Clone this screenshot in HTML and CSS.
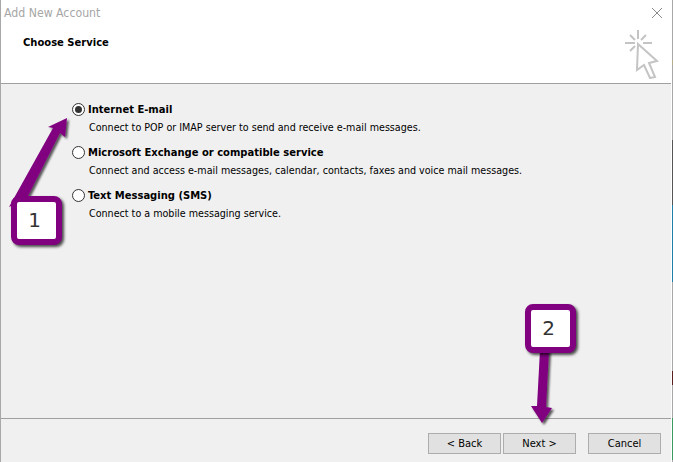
FILE: index.html
```html
<!DOCTYPE html>
<html>
<head>
<meta charset="utf-8">
<title>Add New Account</title>
<link rel="stylesheet" href="styles.css">
</head>
<body>
<div class="window">
  <header class="header">
    <div class="title-row">
      <span class="title">Add New Account</span>
      <svg class="close" width="10" height="10" viewBox="0 0 10 10"><path d="M0 0L10 10M10 0L0 10" stroke="#8a8a8a" stroke-width="1" fill="none"/></svg>
    </div>
    <div class="sub-row">
      <h1 class="heading">Choose Service</h1>
      <svg class="wizard" width="36" height="49" viewBox="0 0 36 49">
        <g stroke="#c4c4c4" stroke-width="2" fill="none">
          <path d="M13 0V9M0 13H10M18 13H27M5 5L10 10M21 5L16 10M5 21L10 16"/>
          <path d="M13 14L32 31L24 33L30 47L25 48L19 35L12 40Z" fill="#fff"/>
        </g>
      </svg>
    </div>
  </header>
  <main class="body">
    <div class="option">
      <div class="option-head"><span class="radio radio-on"></span><span class="option-title">Internet E-mail</span></div>
      <p class="option-desc">Connect to POP or IMAP server to send and receive e-mail messages.</p>
    </div>
    <div class="option">
      <div class="option-head"><span class="radio"></span><span class="option-title">Microsoft Exchange or compatible service</span></div>
      <p class="option-desc">Connect and access e-mail messages, calendar, contacts, faxes and voice mail messages.</p>
    </div>
    <div class="option">
      <div class="option-head"><span class="radio"></span><span class="option-title">Text Messaging (SMS)</span></div>
      <p class="option-desc">Connect to a mobile messaging service.</p>
    </div>
  </main>
  <footer class="footer">
    <button class="btn">&lt; Back</button>
    <button class="btn">Next &gt;</button>
    <button class="btn btn-cancel">Cancel</button>
  </footer>
  <svg class="arrows" width="673" height="462" viewBox="0 0 673 462">
    <defs><filter id="sh" x="-20%" y="-20%" width="140%" height="140%"><feDropShadow dx="2" dy="2" stdDeviation="1.2" flood-color="#000" flood-opacity=".65"/></filter></defs>
    <path filter="url(#sh)" fill="#800080" d="M9 207L53 128L48 127L67 118L65 137L60 133L27 198Z"/>
    <path filter="url(#sh)" fill="#800080" d="M540 350H549L546 407L552 408L542 423L531 406L537 406Z"/>
  </svg>
  <div class="callout callout-1">1</div>
  <div class="callout callout-2">2</div>
  <div class="edge"></div>
</div>
</body>
</html>
```
FILE: styles.css
```css
* { box-sizing: border-box; }
html, body { margin: 0; padding: 0; }
body { width: 673px; height: 462px; overflow: hidden; background: #fff; font-family: "DejaVu Sans Condensed", "DejaVu Sans", sans-serif; font-size: 11px; color: #000; }
.window { position: relative; width: 673px; height: 462px; display: flex; flex-direction: column; border-left: 1px solid #a8a8a8; border-right: 2px solid #fff; }
.header { height: 84px; background: #fff; border-bottom: 1px solid #a0a0a0; padding: 5px 9px 0 3px; }
.title-row { display: flex; justify-content: space-between; align-items: center; height: 15px; }
.title { font-size: 12.2px; color: #a6a6a6; }
.sub-row { display: flex; justify-content: space-between; align-items: flex-start; padding: 9px 1px 0 19px; }
.heading { margin: 7px 0 0; font-size: 11.1px; font-weight: bold; }
.wizard { margin-top: 1px; flex: none; }
.body { flex: 1; background: #f0f0f0; padding: 19px 0 0 71px; display: flex; flex-direction: column; gap: 12px; }
.option { display: flex; flex-direction: column; gap: 5px; }
.option-head { display: flex; align-items: center; gap: 3px; height: 13px; }
.option-title { font-weight: bold; font-size: 11.1px; }
.option-desc { margin: 0; padding-left: 17px; line-height: 13px; font-size: 10.65px; }
.radio { width: 13px; height: 13px; border: 1px solid #333; border-radius: 50%; background: #fff; flex: none; position: relative; }
.radio-on::after { content: ""; position: absolute; left: 2px; top: 2px; width: 7px; height: 7px; border-radius: 50%; background: #333; }
.footer { height: 44px; background: #f0f0f0; border-top: 1px solid #a0a0a0; display: flex; padding: 14px 0 0 427px; gap: 2px; }
.btn { width: 73px; height: 21px; background: #e1e1e1; border: 1px solid #adadad; padding: 0; font: inherit; color: #000; }
.btn-cancel { margin-left: 10px; }
.arrows { position: absolute; left: -1px; top: 0; pointer-events: none; }
.callout { position: absolute; width: 51px; height: 49px; padding: 0 4px 2px 0; background: #fff; border: 6px solid #800080; border-radius: 8px; box-shadow: 2px 2px 3px rgba(0,0,0,.7); font-family: "DejaVu Sans", sans-serif; font-size: 20px; display: flex; align-items: center; justify-content: center; color: #333; }
.callout-1 { left: 10px; top: 196px; }
.callout-2 { left: 524px; top: 304px; }
.edge { position: absolute; right: -2px; top: 0; width: 1px; height: 462px; background: linear-gradient(#a8a8a8 60px, #b5ad8c 60px, #b5ad8c 65px, #a8a8a8 65px, #a8a8a8 140px, #555 140px, #555 205px, #1f7fa8 205px, #1f7fa8 282px, #a8a8a8 282px, #a8a8a8 371px, #5a2020 371px, #5a2020 385px, #a8a8a8 385px, #a8a8a8 418px, #3a9a60 418px, #3a9a60 460px, #a8a8a8 460px); }
```
